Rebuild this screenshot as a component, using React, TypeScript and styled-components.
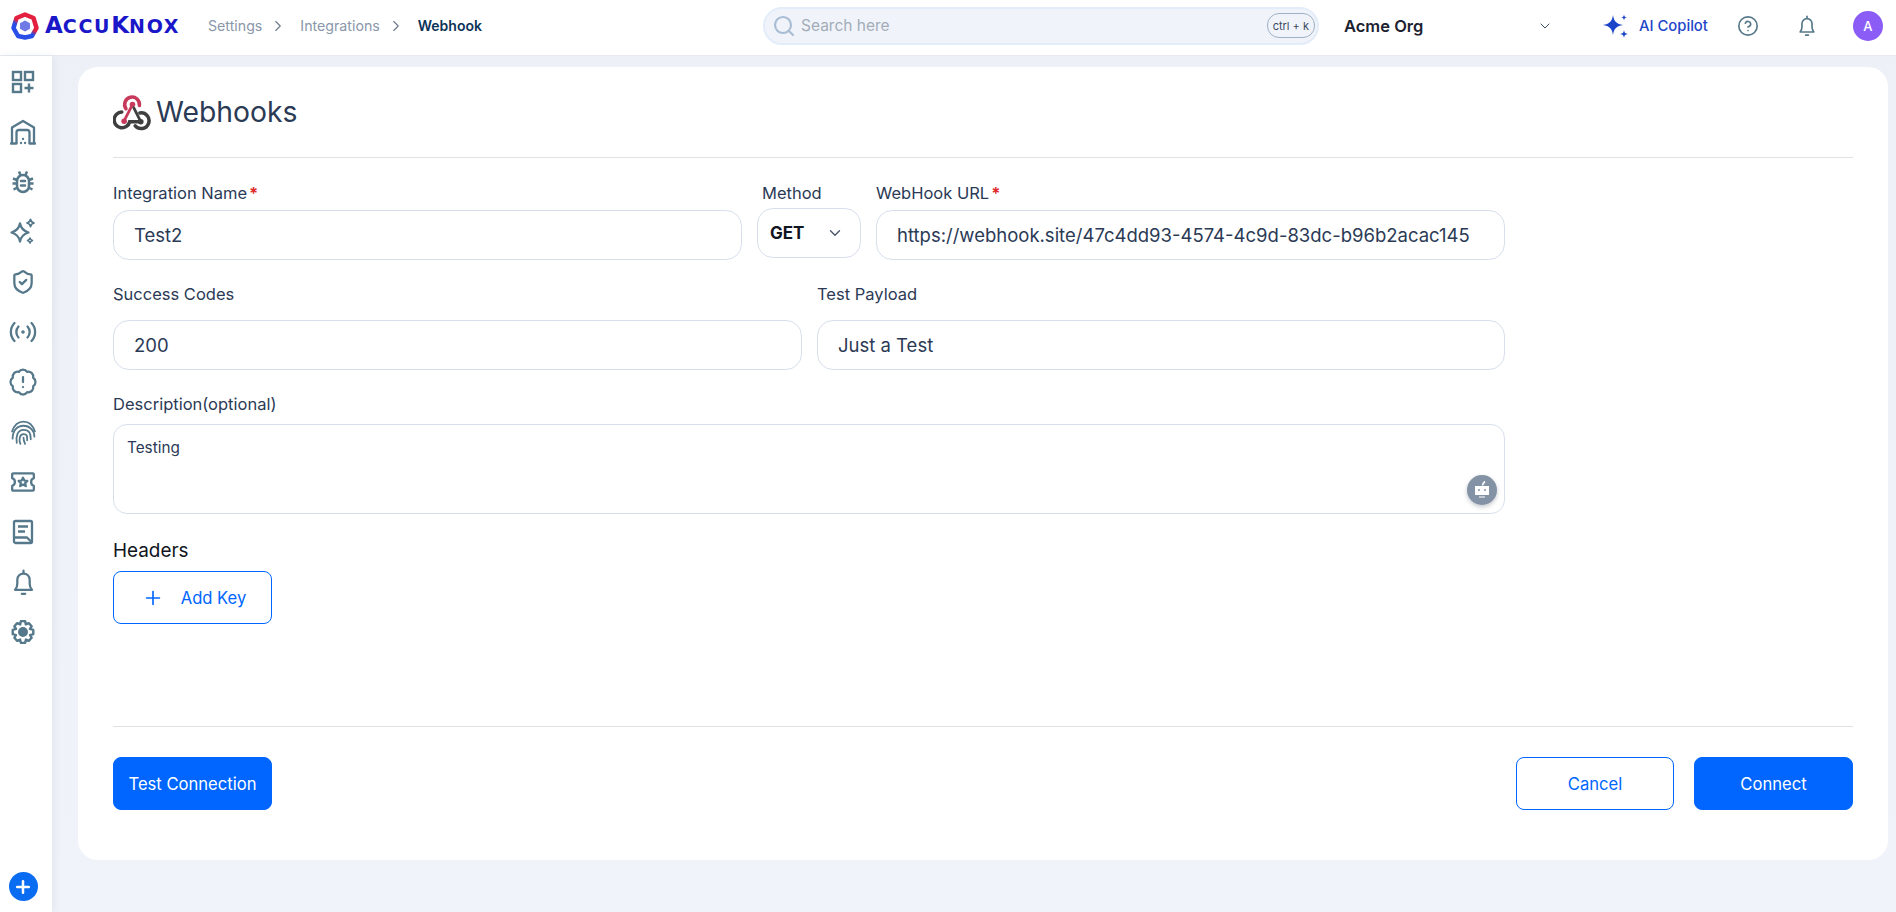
import styled, { createGlobalStyle } from "styled-components";
import { BadgeAlert, ChevronDown, ChevronRight, CircleHelp, Plus, Search, ShieldCheck } from "lucide-react";

const GlobalStyle = createGlobalStyle`
  html, body { margin: 0; padding: 0; height: 100%; }
  body { background: linear-gradient(#edf0f6, #f0f3f9); font-family: Inter, "Liberation Sans", sans-serif; color: #2b3a55; overflow: hidden; }
  * { box-sizing: border-box; }
`;

const Page = styled.div`
  width: 1896px;
  height: 912px;
  display: flex;
  flex-direction: column;
`;

const TopBar = styled.header`
  height: 56px;
  flex: none;
  background: #fff;
  border-bottom: 1px solid #e7eaf0;
  display: flex;
  align-items: center;
  padding: 0 0 4px 11px;
`;

const Logo = styled.div`
  width: 197px;
  display: flex;
  align-items: center;
  gap: 6px;
`;

const LogoText = styled.span`
  font-family: "DejaVu Sans", sans-serif;
  font-size: 23px;
  line-height: 30px;
  font-weight: 700;
  color: #1a17c9;
  white-space: nowrap;
`;

const LogoSmall = styled.span`
  font-size: 19px;
  letter-spacing: 1.7px;
`;

const Crumbs = styled.nav`
  display: flex;
  align-items: center;
  width: 555px;
  font-size: 14.2px;
`;

const Crumb = styled.span<{ $current?: boolean }>`
  color: ${({ $current }) => ($current ? "#0c3358" : "#8a97aa")};
  font-weight: ${({ $current }) => ($current ? 600 : 400)};
  font-size: ${({ $current }) => ($current ? "14px" : "inherit")};
`;

const CrumbSep = styled.span`
  display: flex;
  width: 38px;
  justify-content: center;
  padding-right: 6px;
  color: #6d7a8c;
`;

const SearchBox = styled.div`
  width: 556px;
  height: 38px;
  border-radius: 19px;
  background: #f0f4fa;
  border: 2px solid #e3edfa;
  display: flex;
  align-items: center;
  padding: 0 2px 0 7px;
  gap: 5px;
`;

const SearchText = styled.span`
  flex: 1;
  font-size: 15.5px;
  color: #a3acb9;
`;

const Kbd = styled.span`
  height: 25px;
  padding: 0 5px;
  border: 1px solid #9fb0c4;
  border-radius: 12px;
  font-size: 11px;
  display: flex;
  align-items: center;
  color: #3b4a60;
`;

const OrgPicker = styled.div`
  width: 209px;
  margin-left: 25px;
  display: flex;
  align-items: center;
  justify-content: space-between;
  font-size: 16.5px;
  font-weight: 600;
  color: #1c2230;
`;

const Copilot = styled.div`
  margin-left: 48px;
  display: flex;
  align-items: center;
  gap: 10px;
  font-size: 14.8px;
  font-weight: 500;
  color: #1d45c9;
`;

const TopIcon = styled.span<{ $gap: number }>`
  display: flex;
  margin-left: ${({ $gap }) => $gap}px;
  color: #55788a;
`;

const Avatar = styled.span`
  margin-left: 35px;
  width: 30px;
  height: 30px;
  border-radius: 50%;
  background: #8b5cf6;
  color: #fff;
  font-size: 13px;
  font-weight: 500;
  display: flex;
  align-items: center;
  justify-content: center;
`;

const Body = styled.div`
  flex: 1;
  display: flex;
  min-height: 0;
`;

const Sidebar = styled.aside`
  width: 52px;
  flex: none;
  background: #fff;
  box-shadow: 2px 0 8px rgba(40, 60, 110, 0.07);
  display: flex;
  flex-direction: column;
  align-items: center;
  padding: 1px 6px 11px 0;
`;

const NavIcon = styled.span`
  height: 50px;
  flex: none;
  display: flex;
  align-items: center;
  justify-content: center;
  color: #55788a;
`;

const AddButton = styled.button`
  margin-top: auto;
  width: 29px;
  height: 29px;
  border: 0;
  padding: 0;
  border-radius: 50%;
  background: #0a6cf1;
  color: #fff;
  display: flex;
  align-items: center;
  justify-content: center;
`;

const Main = styled.main`
  flex: 1;
  min-width: 0;
  padding: 11px 8px 52px 26px;
`;

const Card = styled.section`
  height: 100%;
  background: #fff;
  border-radius: 20px;
  padding: 0 35px;
  display: flex;
  flex-direction: column;
`;

const CardHead = styled.div`
  height: 91px;
  flex: none;
  border-bottom: 1px solid #dfe1e5;
  display: flex;
  align-items: center;
  padding-bottom: 1px;
  gap: 5px;
`;

const Title = styled.h1`
  margin: 0;
  font-size: 28.3px;
  font-weight: 400;
  color: #2b3a55;
`;

const Form = styled.div`
  flex: 1;
  width: 1392px;
  padding-top: 25px;
`;

const Row = styled.div`
  display: flex;
  gap: 15px;
  margin-bottom: 24px;
`;

const Field = styled.div<{ $w?: number; $grow?: boolean }>`
  width: ${({ $w }) => ($w ? `${$w}px` : "auto")};
  flex: ${({ $grow }) => ($grow ? 1 : "none")};
`;

const Label = styled.div<{ $gap?: number; $inset?: number }>`
  height: 21px;
  font-size: 16.5px;
  line-height: 21px;
  color: #2b3a55;
  margin-bottom: ${({ $gap }) => $gap ?? 6}px;
  padding-left: ${({ $inset }) => $inset ?? 0}px;
  white-space: nowrap;
`;

const Required = styled.span`
  color: #e02b2b;
  font-weight: 700;
  margin-left: 2px;
`;

const Input = styled.div`
  height: 50px;
  border: 1px solid #d8dfec;
  border-radius: 16px;
  padding: 0 20px;
  display: flex;
  align-items: center;
  font-size: 18.5px;
  color: #2b3a55;
  white-space: nowrap;
`;

const MethodSelect = styled(Input)`
  padding: 0 16px 0 12px;
  justify-content: space-between;
  font-size: 17px;
  font-weight: 700;
  color: #10151f;
  margin-top: -2px;
`;

const TextArea = styled.div`
  position: relative;
  height: 90px;
  border: 1px solid #d8dfec;
  border-radius: 14px;
  padding: 13px 13px;
  font-size: 15.3px;
  line-height: 20px;
  color: #2b3a55;
`;

const BotBadge = styled.span`
  position: absolute;
  right: 7px;
  bottom: 8px;
  width: 30px;
  height: 30px;
  border-radius: 50%;
  background: #8492a6;
  box-shadow: 0 2px 4px rgba(60, 70, 90, 0.3);
  display: flex;
  align-items: center;
  justify-content: center;
`;

const HeadersTitle = styled.div`
  font-size: 18.9px;
  line-height: 24px;
  color: #0f1420;
  margin: 25px 0 8px;
`;

const ActionButton = styled.button<{ $outline?: boolean }>`
  width: 159px;
  height: 53px;
  border-radius: 8px;
  border: 1px solid #0066ff;
  background: ${({ $outline }) => ($outline ? "#fff" : "#0066ff")};
  color: ${({ $outline }) => ($outline ? "#0066ff" : "#fff")};
  font-family: inherit;
  font-size: 16.6px;
  display: flex;
  align-items: center;
  justify-content: center;
  gap: 17px;
  padding: 0;
`;

const AddKeyButton = styled(ActionButton)`
  padding-left: 3px;
`;

const CancelButton = styled(ActionButton)`
  width: 158px;
`;

const Footer = styled.div`
  flex: none;
  height: 134px;
  border-top: 1px solid #dfe1e5;
  padding-top: 30px;
  display: flex;
  justify-content: space-between;
`;

const FooterRight = styled.div`
  display: flex;
  gap: 20px;
`;

const LogoMark = () => (
  <svg width="28" height="28" viewBox="0 0 28 28" fill="none">
    <defs>
      <linearGradient id="logoRing" x1="0.75" y1="0.05" x2="0.2" y2="0.95">
        <stop offset="0.45" stopColor="#e3203f" />
        <stop offset="0.62" stopColor="#2a4fe6" />
      </linearGradient>
    </defs>
    <path d="M14 2.500 22.500 6 25.500 16 21 24 14 25.500 7 24 2.500 16 5.500 6Z" stroke="url(#logoRing)" strokeWidth="4.500" strokeLinejoin="round" />
    <path d="M14 8.500 19 11.200V16.800L14 19.500 9 16.800V11.200Z" fill="#6f7ae6" />
  </svg>
);

const WebhookIcon = () => (
  <svg width="38" height="40" viewBox="-2.500 -2 41 43" fill="none" strokeLinecap="round">
    <path d="M11.500 16A8 8 0 1 1 26 12.500" stroke="#c73a5c" strokeWidth="3.800" />
    <path d="M18.500 11.500 10 28" stroke="#c73a5c" strokeWidth="3" />
    <circle cx="18.500" cy="11.500" r="3" fill="#c73a5c" />
    <path d="M20 15 27 29" stroke="#3f3f3f" strokeWidth="3" />
    <path d="M7 19.500A8.500 8.500 0 1 0 15.500 30H27" stroke="#3f3f3f" strokeWidth="3.800" />
    <path d="M26.500 20.500A8.500 8.500 0 1 1 21.500 34.500" stroke="#3f3f3f" strokeWidth="3.800" />
    <circle cx="9.500" cy="29.500" r="3" fill="#c73a5c" />
    <circle cx="27.500" cy="30" r="3" fill="#3f3f3f" />
  </svg>
);

const CopilotStar = () => (
  <svg width="28" height="28" viewBox="0 0 28 28" fill="#1d45c9">
    <path d="M12 3C13 9.500 15.500 12 22 13 15.500 14 13 16.500 12 23 11 16.500 8.500 14 2 13 8.500 12 11 9.500 12 3Z" />
    <path d="M23 2.500C23.300 4.500 24 5.200 26 5.500 24 5.800 23.300 6.500 23 8.500 22.700 6.500 22 5.800 20 5.500 22 5.200 22.700 4.500 23 2.500Z" />
    <path d="M23 18C23.400 20.800 24.200 21.600 27 22 24.200 22.400 23.400 23.200 23 26 22.600 23.200 21.800 22.400 19 22 21.800 21.600 22.600 20.800 23 18Z" />
  </svg>
);

const BellIcon = ({ size = 24, weight = 2 }: { size?: number; weight?: number }) => (
  <svg width={size} height={size} viewBox="0 0 24 24" fill="none" stroke="currentColor" strokeWidth={weight} strokeLinecap="round" strokeLinejoin="round">
    <path d="M12 1.500V3.500" />
    <path d="M4.500 18.500C5.800 17 6.500 15.500 6.500 13V9.500A5.500 5.500 0 0 1 17.500 9.500V13C17.500 15.500 18.200 17 19.500 18.500Z" />
    <path d="M10.500 22H13.500" />
  </svg>
);

const GridPlusIcon = () => (
  <svg width="24" height="24" viewBox="0 0 24 24" fill="none" stroke="currentColor" strokeWidth="2.400">
    <rect x="2" y="2" width="8" height="8" />
    <rect x="14" y="2" width="8" height="8" />
    <rect x="2" y="14" width="8" height="8" />
    <path d="M18 13.500V22.500M13.500 18H22.500" />
  </svg>
);

const WarehouseIcon = () => (
  <svg width="26" height="26" viewBox="0 0 26 26" fill="none" stroke="currentColor" strokeWidth="2.300" strokeLinejoin="round">
    <path d="M2 24.500V8.500L13 2 24 8.500V24.500" />
    <path d="M6.500 24.500V13.500C6.500 12 7.500 11 9 11H17C18.500 11 19.500 12 19.500 13.500V24.500" />
    <path d="M1 24.500H6.500M19.500 24.500H25M11 24H11.100M15 24H15.100M13 20H13.100" strokeLinecap="round" />
  </svg>
);

const BugIcon = () => (
  <svg width="24" height="24" viewBox="0 0 24 24" fill="none" stroke="currentColor" strokeWidth="2.500">
    <rect x="6" y="5" width="12" height="17" rx="6" />
    <path d="M8 1.500 9.500 5M16 1.500 14.500 5M2 8.500 6 10M22 8.500 18 10M1.500 13.500H6M22.500 13.500H18M2.500 19.500 6.500 17.500M21.500 19.500 17.500 17.500" />
    <path d="M10 11H14M10 15.500H14" strokeLinecap="round" />
  </svg>
);

const SparkIcon = () => (
  <svg width="28" height="28" viewBox="0 0 28 28" fill="none" stroke="currentColor" strokeWidth="2.300" strokeLinejoin="round">
    <path d="M11 5.500C11.900 10.500 14 12.800 19.500 14.500 14 16.200 11.900 18.500 11 23.500 10.100 18.500 8 16.200 2.500 14.500 8 12.800 10.100 10.500 11 5.500Z" />
    <path d="M21.500 1.500C21.900 3.500 22.700 4.300 25 5 22.700 5.700 21.900 6.500 21.500 8.500 21.100 6.500 20.300 5.700 18 5 20.300 4.300 21.100 3.500 21.500 1.500Z" strokeWidth="1.800" />
    <path d="M21 20C21.300 21.400 21.800 21.900 23.500 22.500 21.800 23.100 21.300 23.600 21 25 20.700 23.600 20.200 23.100 18.500 22.500 20.200 21.900 20.700 21.400 21 20Z" strokeWidth="1.600" />
  </svg>
);

const RadioIcon = () => (
  <svg width="28" height="28" viewBox="0 0 28 28" fill="none" stroke="currentColor" strokeWidth="2.300" strokeLinecap="round">
    <circle cx="14" cy="14" r="1.800" fill="currentColor" stroke="none" />
    <path d="M9.500 8.500A8 8 0 0 0 9.500 19.500M18.500 8.500A8 8 0 0 1 18.500 19.500" />
    <path d="M5.500 5A13 13 0 0 0 5.500 23M22.500 5A13 13 0 0 1 22.500 23" />
  </svg>
);

const FingerprintIcon = () => (
  <svg width="27" height="27" viewBox="0 0 26 26" fill="none" stroke="currentColor" strokeWidth="1.700" strokeLinecap="round">
    <path d="M2 12C4 6 8 2.500 13 2.500S22 6 24 12" />
    <path d="M2.500 19C2.500 11 7 6.500 13 6.500S23.500 11 23.500 17" />
    <path d="M6.500 23C5.500 17 7 10.500 13 10.500S20 14 20 19.500" />
    <path d="M10 24C8.500 20 9 14.500 13 14.500S16.500 17 16.500 20.500" />
    <path d="M14.500 24C13.500 21.500 13 19.500 13 18" />
  </svg>
);

const TicketStarIcon = () => (
  <svg width="26" height="26" viewBox="0 0 24 24" fill="none" stroke="currentColor" strokeWidth="2.100" strokeLinejoin="round">
    <path d="M2 5C2 4.400 2.400 4 3 4H21C21.600 4 22 4.400 22 5V8.500C20 9 19.500 10.500 19.500 12S20 15 22 15.500V19C22 19.600 21.600 20 21 20H3C2.400 20 2 19.600 2 19V15.500C4 15 4.500 13.500 4.500 12S4 9 2 8.500Z" />
    <path d="M12 8 13.300 10.700 16 11 14 13 14.600 15.800 12 14.400 9.400 15.800 10 13 8 11 10.700 10.700Z" />
  </svg>
);

const NotebookIcon = () => (
  <svg width="24" height="26" viewBox="0 0 24 26" fill="none" stroke="currentColor" strokeWidth="2.300" strokeLinejoin="round">
    <rect x="3" y="2" width="18" height="22" rx="1.500" />
    <path d="M3 18.500H16L21 23.500" />
    <path d="M7 7.500H17M7 12.500H14" />
  </svg>
);

const GearIcon = () => (
  <svg width="26" height="26" viewBox="0 0 24 24" fill="none" stroke="currentColor" strokeWidth="2.200" strokeLinejoin="round">
    <path d="M10 2H14L14.600 5 17.300 3.800 20 6.700 18.400 9.200 21.500 10V14L18.500 14.800 20 17.300 17.300 20.200 14.700 19 14 22H10L9.300 19 6.700 20.200 4 17.300 5.500 14.800 2.500 14V10L5.600 9.200 4 6.700 6.700 3.800 9.400 5Z" />
    <circle cx="12" cy="12" r="3.500" fill="currentColor" />
  </svg>
);

const RobotIcon = () => (
  <svg width="22" height="20" viewBox="0 0 22 20" fill="none">
    <path d="M11.500 5.500C11.800 3.500 12.500 2.500 14 1.500" stroke="#fff" strokeWidth="1.600" />
    <rect x="4" y="6" width="14" height="9" fill="#fff" />
    <circle cx="8" cy="10" r="1" fill="#8492a6" />
    <circle cx="14" cy="10" r="1" fill="#8492a6" />
    <rect x="8" y="16.500" width="6" height="1" fill="#fff" />
  </svg>
);

export default function App() {
  return (
    <Page>
      <GlobalStyle />
      <TopBar>
        <Logo>
          <LogoMark />
          <LogoText>
            A<LogoSmall>CCU</LogoSmall>K<LogoSmall>NOX</LogoSmall>
          </LogoText>
        </Logo>
        <Crumbs>
          <Crumb>Settings</Crumb>
          <CrumbSep>
            <ChevronRight size={18} strokeWidth={1.5} />
          </CrumbSep>
          <Crumb>Integrations</Crumb>
          <CrumbSep>
            <ChevronRight size={18} strokeWidth={1.5} />
          </CrumbSep>
          <Crumb $current>Webhook</Crumb>
        </Crumbs>
        <SearchBox>
          <Search size={24} color="#a9bdd4" strokeWidth={2.2} />
          <SearchText>Search here</SearchText>
          <Kbd>ctrl + k</Kbd>
        </SearchBox>
        <OrgPicker>
          Acme Org
          <ChevronDown size={16} color="#3f4d60" strokeWidth={1.5} />
        </OrgPicker>
        <Copilot>
          <CopilotStar />
          AI Copilot
        </Copilot>
        <TopIcon $gap={29}>
          <CircleHelp size={22} strokeWidth={1.8} />
        </TopIcon>
        <TopIcon $gap={37}>
          <BellIcon size={22} weight={1.8} />
        </TopIcon>
        <Avatar>A</Avatar>
      </TopBar>
      <Body>
        <Sidebar>
          <NavIcon><GridPlusIcon /></NavIcon>
          <NavIcon><WarehouseIcon /></NavIcon>
          <NavIcon><BugIcon /></NavIcon>
          <NavIcon><SparkIcon /></NavIcon>
          <NavIcon><ShieldCheck size={26} strokeWidth={2.1} /></NavIcon>
          <NavIcon><RadioIcon /></NavIcon>
          <NavIcon><BadgeAlert size={30} strokeWidth={1.8} /></NavIcon>
          <NavIcon><FingerprintIcon /></NavIcon>
          <NavIcon><TicketStarIcon /></NavIcon>
          <NavIcon><NotebookIcon /></NavIcon>
          <NavIcon><BellIcon size={27} weight={2} /></NavIcon>
          <NavIcon><GearIcon /></NavIcon>
          <AddButton>
            <Plus size={20} strokeWidth={3} />
          </AddButton>
        </Sidebar>
        <Main>
          <Card>
            <CardHead>
              <WebhookIcon />
              <Title>Webhooks</Title>
            </CardHead>
            <Form>
              <Row>
                <Field $w={629}>
                  <Label>Integration Name<Required>*</Required></Label>
                  <Input>Test2</Input>
                </Field>
                <Field $w={104}>
                  <Label $inset={5}>Method</Label>
                  <MethodSelect>
                    GET
                    <ChevronDown size={18} color="#4a5568" strokeWidth={1.8} />
                  </MethodSelect>
                </Field>
                <Field $grow>
                  <Label>WebHook URL<Required>*</Required></Label>
                  <Input>https://webhook.site/47c4dd93-4574-4c9d-83dc-b96b2acac145</Input>
                </Field>
              </Row>
              <Row>
                <Field $w={689}>
                  <Label $gap={15}>Success Codes</Label>
                  <Input>200</Input>
                </Field>
                <Field $grow>
                  <Label $gap={15}>Test Payload</Label>
                  <Input>Just a Test</Input>
                </Field>
              </Row>
              <Label $gap={9}>Description(optional)</Label>
              <TextArea>
                Testing
                <BotBadge>
                  <RobotIcon />
                </BotBadge>
              </TextArea>
              <HeadersTitle>Headers</HeadersTitle>
              <AddKeyButton $outline>
                <Plus size={22} strokeWidth={1.8} />
                Add Key
              </AddKeyButton>
            </Form>
            <Footer>
              <ActionButton>Test Connection</ActionButton>
              <FooterRight>
                <CancelButton $outline>Cancel</CancelButton>
                <ActionButton>Connect</ActionButton>
              </FooterRight>
            </Footer>
          </Card>
        </Main>
      </Body>
    </Page>
  );
}
